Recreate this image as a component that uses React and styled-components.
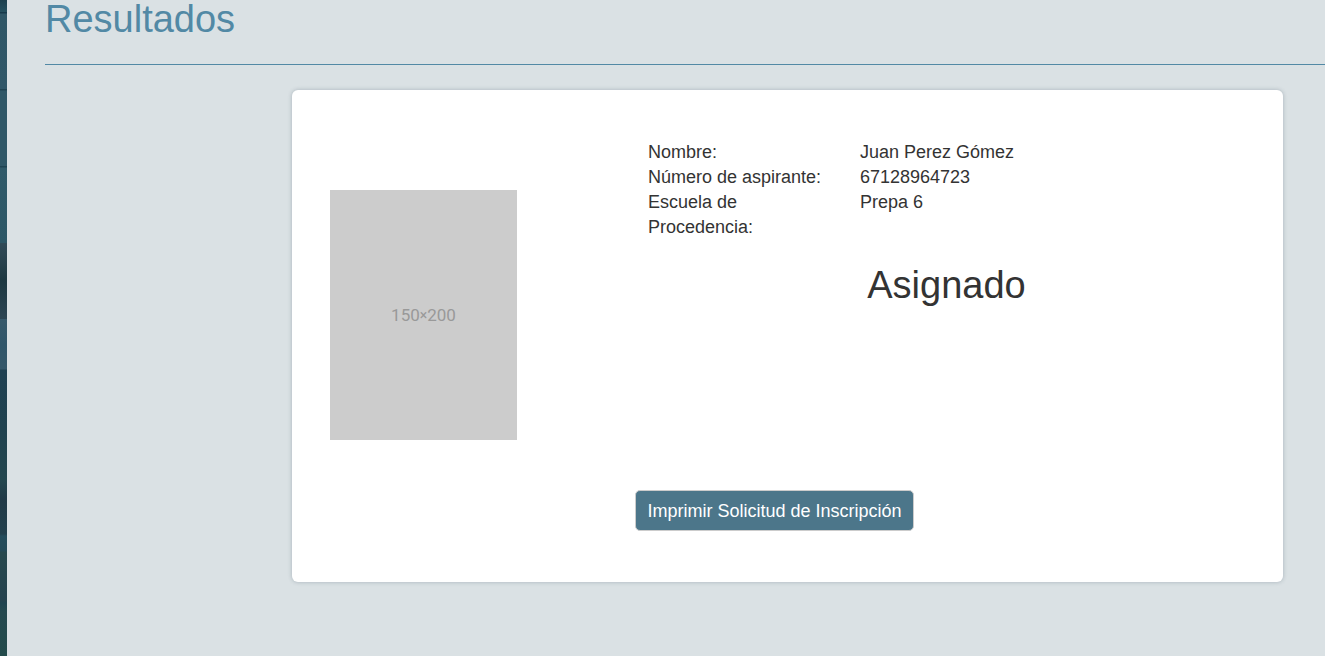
import React from 'react';
import styled, { createGlobalStyle } from 'styled-components';

const GlobalStyle = createGlobalStyle`
  *, *::before, *::after { box-sizing: border-box; }
  body {
    margin: 0;
    font-family: "Liberation Sans", Arial, Helvetica, sans-serif;
    font-size: 18px;
    line-height: 25px;
    color: #333;
    background: #dae1e4;
  }
`;

const Page = styled.div`
  display: flex;
  min-height: 100vh;
`;

const Backdrop = styled.div`
  flex: 0 0 7px;
  background: linear-gradient(
    to bottom,
    #1d404e 0, #25505f 12px,
    #17394a 12px, #17394a 13px,
    #2f5666 14px, #305768 89px,
    #1f4352 89px, #1f4352 90px,
    #2f5767 91px, #2f5767 166px,
    #1f4352 166px, #1f4352 167px,
    #305a69 168px, #2c5766 243px,
    #304a57 243px, #29434e 260px, #1d3841 280px, #2c4553 319px,
    #37596b 319px, #30566a 345px, #35586a 369px,
    #1f4152 370px, #20424f 430px, #24474f 480px,
    #213a47 499px, #22404d 534px,
    #244c5b 536px, #244a58 551px,
    #27494e 552px, #25424e 600px,
    #1f4450 603px, #25494f 612px, #234b4b 100%
  );
`;

const Content = styled.main`
  flex: 1;
  min-width: 0;
  padding-left: 38px;
`;

const Title = styled.h1`
  margin: 0 0 25px;
  padding-bottom: 26px;
  border-bottom: 1px solid #5289a5;
  font-size: 38px;
  font-weight: 400;
  line-height: 38px;
  color: #5289a5;
`;

const Card = styled.section`
  margin: 0 42px 50px 247px;
  padding: 50px 38px 51px;
  border-radius: 6px;
  background: #fff;
  box-shadow: 0 0 4px rgba(50, 70, 90, 0.3);
`;

const Columns = styled.div`
  display: grid;
  grid-template-columns: 318px 1fr;
`;

const Photo = styled.div`
  display: flex;
  align-items: center;
  justify-content: center;
  width: 187px;
  height: 250px;
  margin-top: 50px;
  background: #ccc;
  color: #999;
  font-family: Roboto, sans-serif;
  font-size: 17px;
`;

const Times = styled.span`
  font-size: 14px;
`;

const Details = styled.dl`
  display: grid;
  grid-template-columns: 182px 1fr;
  column-gap: 30px;
  margin: 0;
`;

const Label = styled.dt``;

const Value = styled.dd`
  margin: 0;
`;

const Status = styled.h2`
  margin: 24px 0 0;
  font-size: 38px;
  font-weight: 400;
  line-height: 42px;
  text-align: center;
`;

const Actions = styled.div`
  display: flex;
  justify-content: center;
  margin: 50px 26px 0 0;
`;

const PrintButton = styled.button`
  padding: 7px 11px;
  padding-top: 8px;
  border: 1px solid #ccc;
  border-radius: 5px;
  background: #4c768a;
  color: #fff;
  font: inherit;
  line-height: 24px;
  cursor: pointer;
`;

const applicant = [
  ['Nombre:', 'Juan Perez Gómez'],
  ['Número de aspirante:', '67128964723'],
  ['Escuela de Procedencia:', 'Prepa 6'],
];

export default function App() {
  return (
    <Page>
      <GlobalStyle />
      <Backdrop />
      <Content>
        <Title>Resultados</Title>
        <Card>
          <Columns>
            <Photo>150<Times>×</Times>200</Photo>
            <div>
              <Details>
                {applicant.map(([label, value]) => (
                  <React.Fragment key={label}>
                    <Label>{label}</Label>
                    <Value>{value}</Value>
                  </React.Fragment>
                ))}
              </Details>
              <Status>Asignado</Status>
            </div>
          </Columns>
          <Actions>
            <PrintButton type="button">Imprimir Solicitud de Inscripción</PrintButton>
          </Actions>
        </Card>
      </Content>
    </Page>
  );
}
